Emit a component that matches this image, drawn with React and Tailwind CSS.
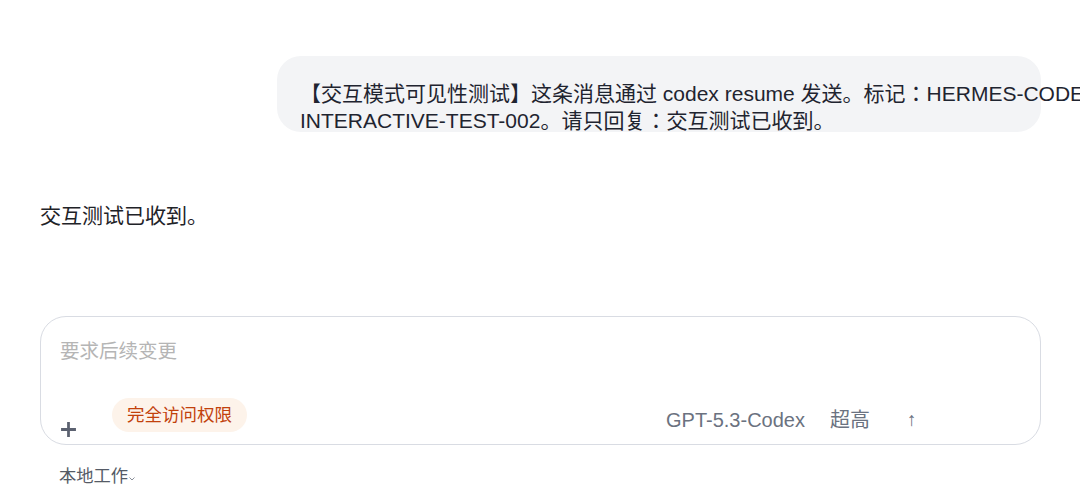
import React from 'react';

const font = { fontFamily: "'Liberation Sans', 'Noto Sans CJK JP', sans-serif" };

export default function App() {
  return (
    <div style={font} className="w-[1080px] h-[500px] bg-white overflow-hidden text-[#1f2430]">
      <div className="ml-[40px] w-[1001px]">
        {/* user message */}
        <div className="pt-[56px] flex justify-end">
          <div className="w-[764px] h-[76px] rounded-[24px] bg-[#f3f4f6] pl-[23px] pt-[24px]">
            <p className="text-[21px] leading-[27px] whitespace-nowrap">
              【交互模式可见性测试】这条消息通过 codex resume 发送。标记：HERMES-CODEX-
              <br />
              INTERACTIVE-TEST-002。请只回复：交互测试已收到。
            </p>
          </div>
        </div>

        {/* assistant reply */}
        <p className="mt-[70px] text-[21px] leading-[28px] text-[#1f2328]">交互测试已收到。</p>

        {/* composer */}
        <div className="mt-[86px] h-[129px] rounded-[26px] border border-[#d9dce3] bg-white flex flex-col">
          <div className="pl-[19px] pt-[20px] text-[19.5px] leading-[28px] text-[#b5b5b5]">要求后续变更</div>
          <div className="mt-[33px] flex items-start">
            <svg className="ml-[19px] mt-[23px]" width="17" height="17" viewBox="0 0 16 16">
              <path d="M8 1v14M1 8h14" stroke="#5b6170" strokeWidth="2.6" />
            </svg>
            <div className="ml-[35px] h-[34px] px-[15px] rounded-full bg-[#fdf3ea] text-[#c2410c] text-[17.5px] flex items-center">
              完全访问权限
            </div>
            <div className="ml-[419px] mt-[8px] flex items-center text-[20px] leading-[28px] text-[#6b7280]">
              <span>GPT-5.3-Codex</span>
              <span className="ml-[25px]">超高</span>
              <span className="ml-[37px] text-[19px]">↑</span>
            </div>
          </div>
        </div>

        {/* footer */}
        <div className="mt-[19px] ml-[19px] flex items-center text-[17.3px] leading-[24px] text-[#555b66]">
          <span>本地工作</span>
          <svg className="ml-[1px] mt-[5px]" width="6" height="4" viewBox="0 0 6 4">
            <path d="M0.5 0.5L3 3L5.5 0.5" fill="none" stroke="#8a8f99" strokeWidth="1" />
          </svg>
        </div>
      </div>
    </div>
  );
}
